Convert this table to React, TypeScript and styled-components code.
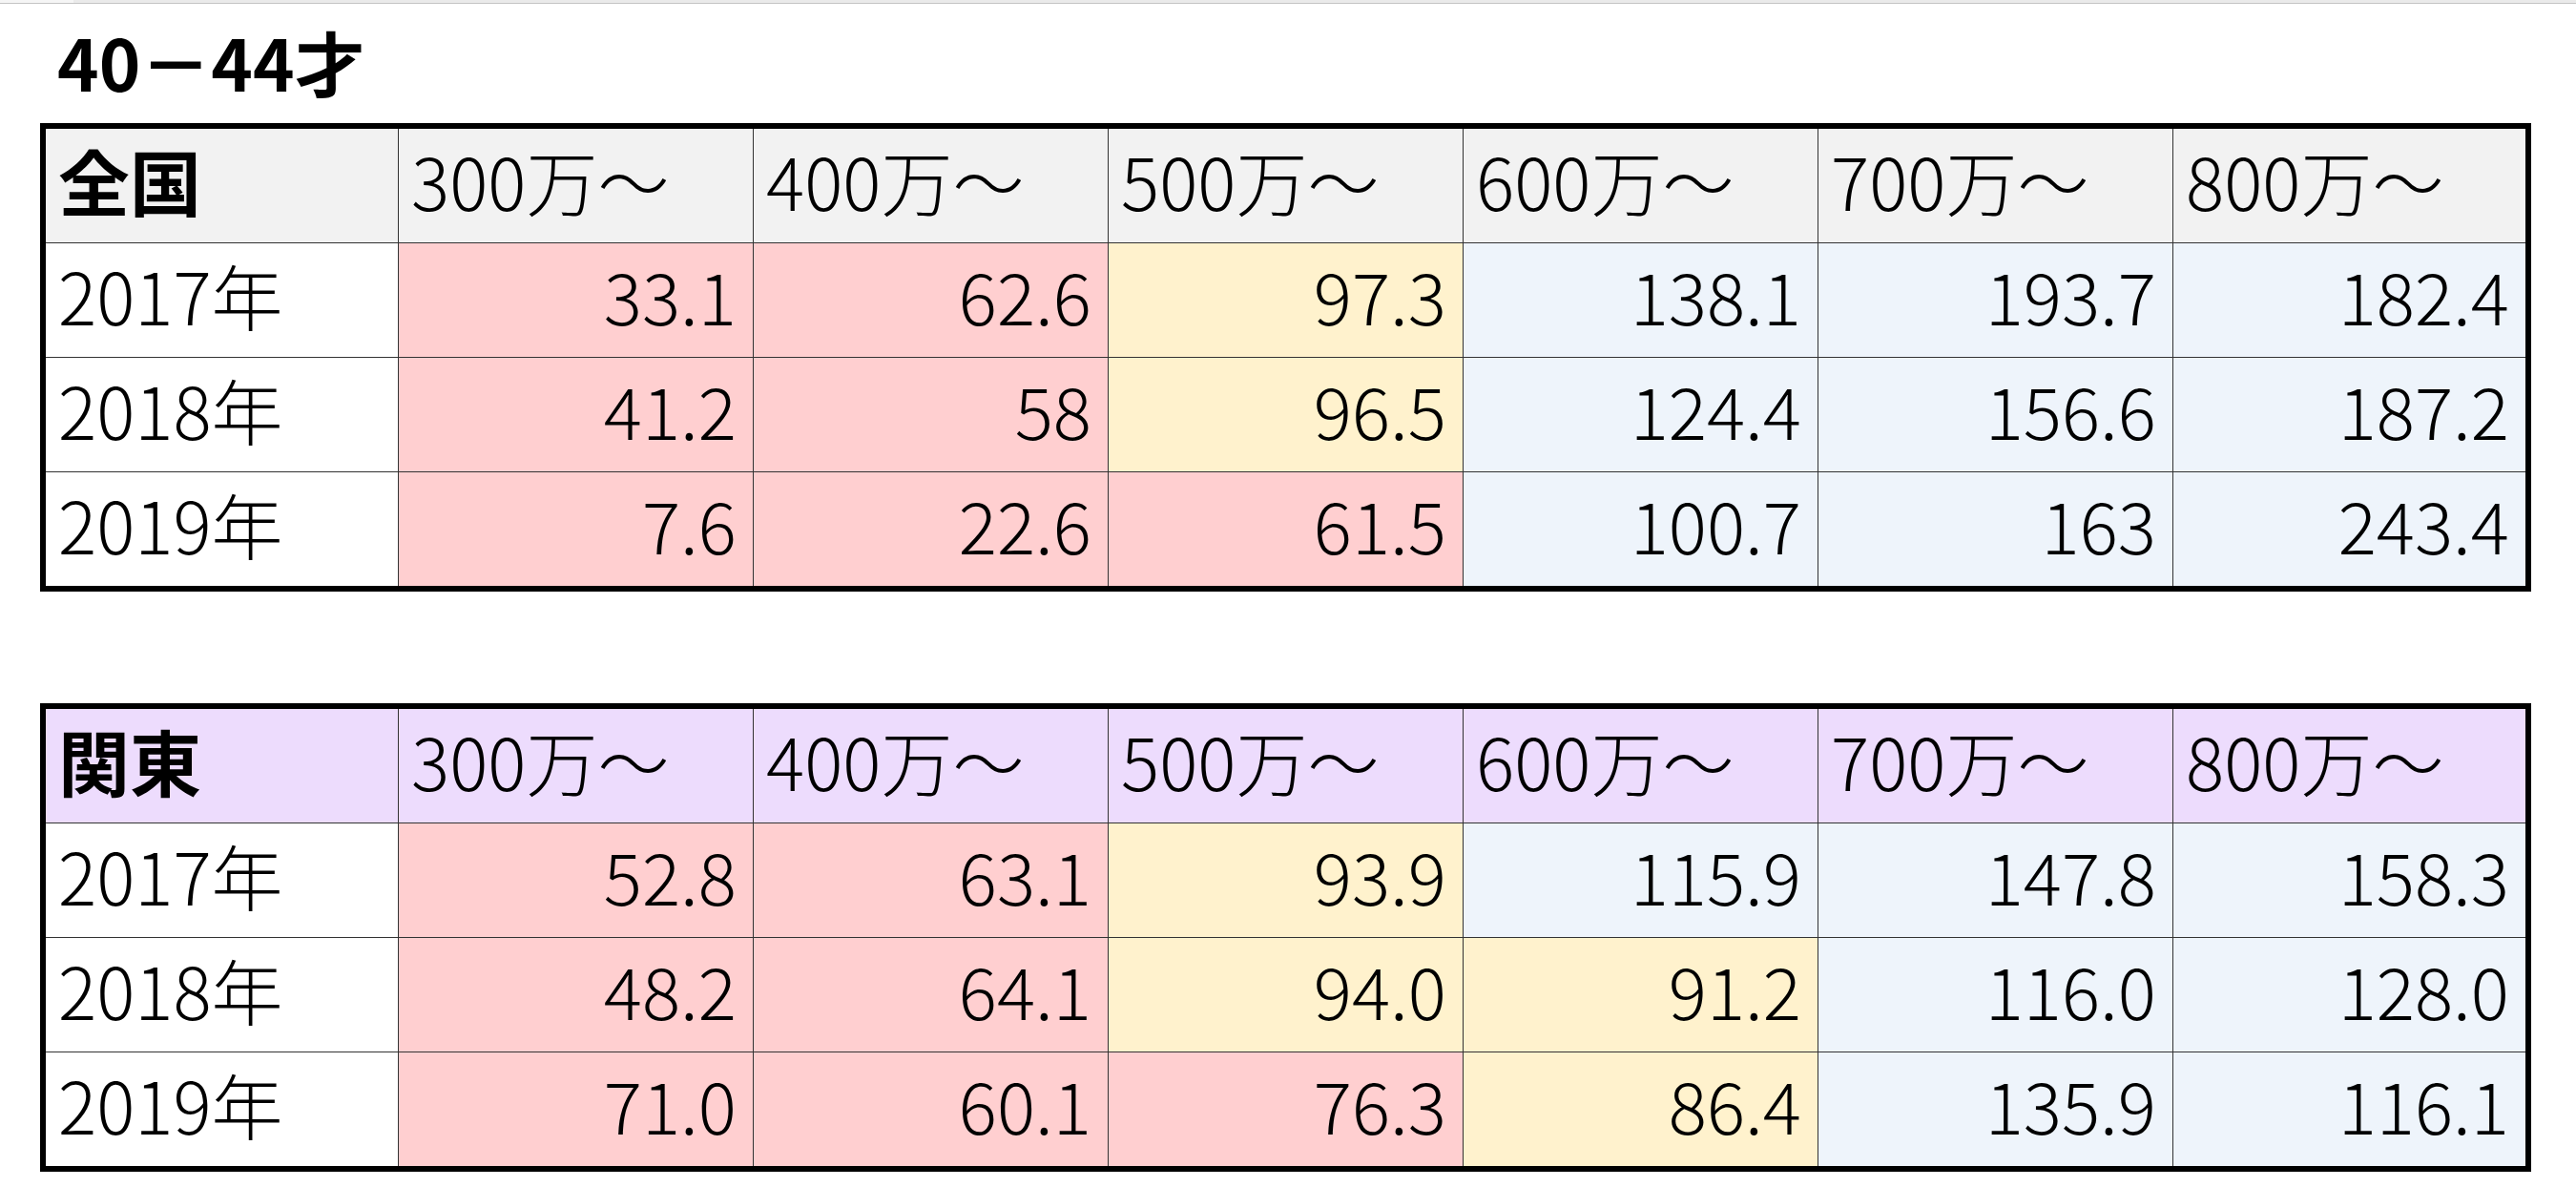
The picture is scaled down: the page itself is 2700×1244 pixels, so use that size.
import styled, { createGlobalStyle } from 'styled-components';

const GlobalStyle = createGlobalStyle`
  html, body {
    margin: 0;
    padding: 0;
    background: #ffffff;
  }
  body {
    font-family: "Noto Sans CJK JP", "Noto Sans", sans-serif;
    color: #000;
  }
`;

const Page = styled.div`
  width: 2700px;
  height: 1244px;
  overflow: hidden;
  background: #fff;
`;

const TopBar = styled.div`
  display: flex;
  height: 3px;
  border-bottom: 1px solid #c4c4c4;
  background: #eaeaea;
`;

const TopBarTab = styled.div`
  width: 77px;
  background: #f5f5f5;
`;

const Sheet = styled.div`
  padding: 22px 0 0 42px;
`;

const Title = styled.h1`
  margin: 0 0 28px 18px;
  font-size: 74px;
  line-height: 75px;
  font-weight: 700;
  letter-spacing: 0;
`;

const Table = styled.div`
  display: grid;
  grid-template-columns: 369px repeat(5, 371px) 369px;
  grid-auto-rows: 119px;
  gap: 1px;
  width: 2599px;
  background: #333333;
  border: 6px solid #000;
  & + & {
    margin-top: 117px;
  }
`;

const tones = {
  plain: '#ffffff',
  gray: '#f2f2f2',
  lilac: '#eddcfd',
  pink: '#ffcfd0',
  yellow: '#fff2cd',
  blue: '#eef4fb',
};

type Tone = keyof typeof tones;

const Cell = styled.div<{ $tone: Tone; $bold?: boolean; $right?: boolean }>`
  display: flex;
  align-items: center;
  justify-content: ${({ $right }) => ($right ? 'flex-end' : 'flex-start')};
  padding: 0 ${({ $right }) => ($right ? '17px' : '0')} 12px ${({ $right }) => ($right ? '0' : '13px')};
  background: ${({ $tone }) => tones[$tone]};
  font-size: 75px;
  font-weight: ${({ $bold }) => ($bold ? 700 : 300)};
  line-height: 1;
  white-space: nowrap;
`;

const bands = ['300万～', '400万～', '500万～', '600万～', '700万～', '800万～'];

const toneFor = (v: string): Tone => {
  const n = parseFloat(v);
  if (n < 80) return 'pink';
  if (n < 100) return 'yellow';
  return 'blue';
};

const tables = [
  {
    region: '全国',
    head: 'gray' as Tone,
    rows: [
      { year: '2017年', values: ['33.1', '62.6', '97.3', '138.1', '193.7', '182.4'] },
      { year: '2018年', values: ['41.2', '58', '96.5', '124.4', '156.6', '187.2'] },
      { year: '2019年', values: ['7.6', '22.6', '61.5', '100.7', '163', '243.4'] },
    ],
  },
  {
    region: '関東',
    head: 'lilac' as Tone,
    rows: [
      { year: '2017年', values: ['52.8', '63.1', '93.9', '115.9', '147.8', '158.3'] },
      { year: '2018年', values: ['48.2', '64.1', '94.0', '91.2', '116.0', '128.0'] },
      { year: '2019年', values: ['71.0', '60.1', '76.3', '86.4', '135.9', '116.1'] },
    ],
  },
];

export default function App() {
  return (
    <Page>
      <GlobalStyle />
      <TopBar>
        <TopBarTab />
      </TopBar>
      <Sheet>
        <Title>40－44才</Title>
        {tables.map((t) => (
          <Table key={t.region}>
            <Cell $tone={t.head} $bold>
              {t.region}
            </Cell>
            {bands.map((b) => (
              <Cell key={b} $tone={t.head}>
                {b}
              </Cell>
            ))}
            {t.rows.map((r) => [
              <Cell key={r.year} $tone="plain">
                {r.year}
              </Cell>,
              ...r.values.map((v, i) => (
                <Cell key={r.year + i} $tone={toneFor(v)} $right>
                  {v}
                </Cell>
              )),
            ])}
          </Table>
        ))}
      </Sheet>
    </Page>
  );
}
